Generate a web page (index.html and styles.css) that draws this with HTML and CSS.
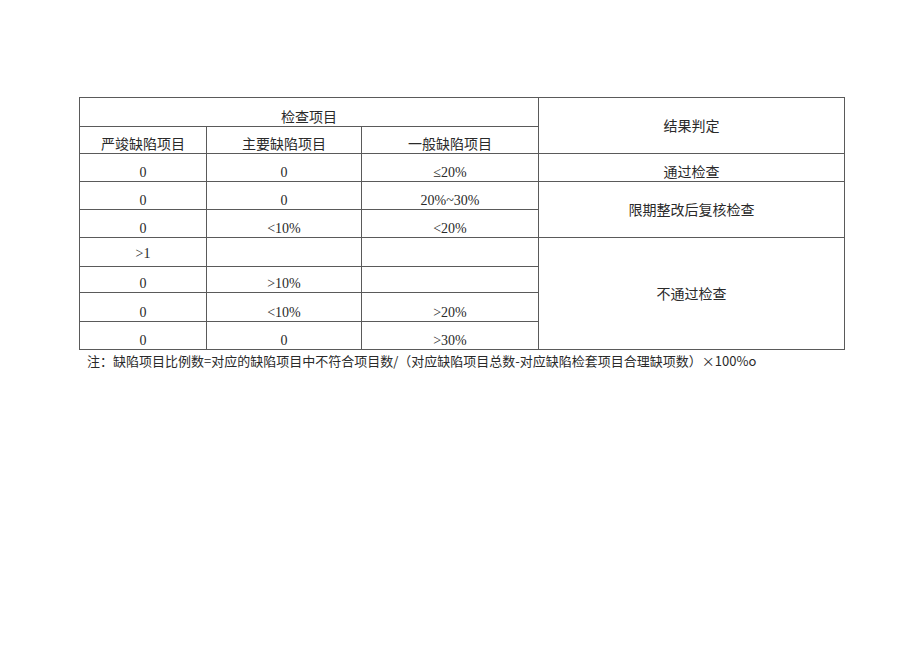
FILE: index.html
```html
<!DOCTYPE html>
<html lang="zh">
<head>
<meta charset="utf-8">
<title>检查项目</title>
<link rel="stylesheet" href="styles.css">
</head>
<body>
<div class="page">
  <table class="grid">
    <colgroup>
      <col class="c1"><col class="c2"><col class="c3"><col class="c4">
    </colgroup>
    <tr class="r1">
      <td colspan="3" class="b">检查项目</td>
      <td rowspan="2" class="m">结果判定</td>
    </tr>
    <tr class="r2">
      <td class="b">严竣缺陷项目</td>
      <td class="b">主要缺陷项目</td>
      <td class="b">一般缺陷项目</td>
    </tr>
    <tr class="r3">
      <td class="b">0</td>
      <td class="b">0</td>
      <td class="b">≤20%</td>
      <td class="b">通过检查</td>
    </tr>
    <tr class="r4">
      <td class="b">0</td>
      <td class="b">0</td>
      <td class="b">20%~30%</td>
      <td rowspan="2" class="m">限期整改后复核检查</td>
    </tr>
    <tr class="r5">
      <td class="b">0</td>
      <td class="b">&lt;10%</td>
      <td class="b">&lt;20%</td>
    </tr>
    <tr class="r6">
      <td class="m">&gt;1</td>
      <td></td>
      <td></td>
      <td rowspan="4" class="m">不通过检查</td>
    </tr>
    <tr class="r7">
      <td class="b">0</td>
      <td class="b">&gt;10%</td>
      <td></td>
    </tr>
    <tr class="r8">
      <td class="b">0</td>
      <td class="b">&lt;10%</td>
      <td class="b">&gt;20%</td>
    </tr>
    <tr class="r9">
      <td class="b">0</td>
      <td class="b">0</td>
      <td class="b">&gt;30%</td>
    </tr>
  </table>
  <p class="note">注：缺陷项目比例数=对应的缺陷项目中不符合项目数/（对应缺陷项目总数-对应缺陷检套项目合理缺项数）×100%o</p>
</div>
</body>
</html>
```

FILE: styles.css
```css
html, body {
  margin: 0;
  padding: 0;
  background: #ffffff;
}

.page {
  padding: 97px 0 0 79px;
  font-family: "Liberation Serif", "Noto Sans CJK SC", serif;
  color: #2a2a2a;
}

.grid {
  border-collapse: collapse;
  table-layout: fixed;
  width: 765px;
}

.c1 { width: 127px; }
.c2 { width: 155px; }
.c3 { width: 177px; }
.c4 { width: 306px; }

.grid td {
  border: 1px solid #5a5a5a;
  padding: 0 0 1px 0;
  text-align: center;
  font-size: 14px;
  line-height: 15px;
}

.grid td.b { vertical-align: bottom; }
.grid td.m { vertical-align: middle; padding: 2px 0 0 0; }

.r1 { height: 29px; }
.r2 { height: 27px; }
.r3 { height: 28px; }
.r4 { height: 28px; }
.r5 { height: 28px; }
.r6 { height: 29px; }
.r7 { height: 26px; }
.r8 { height: 29px; }
.r9 { height: 28px; }

.note {
  margin: 3px 0 0 8px;
  font-family: "Noto Sans CJK SC", sans-serif;
  font-size: 13px;
  line-height: 16px;
  color: #2a2a2a;
  white-space: nowrap;
}
```
